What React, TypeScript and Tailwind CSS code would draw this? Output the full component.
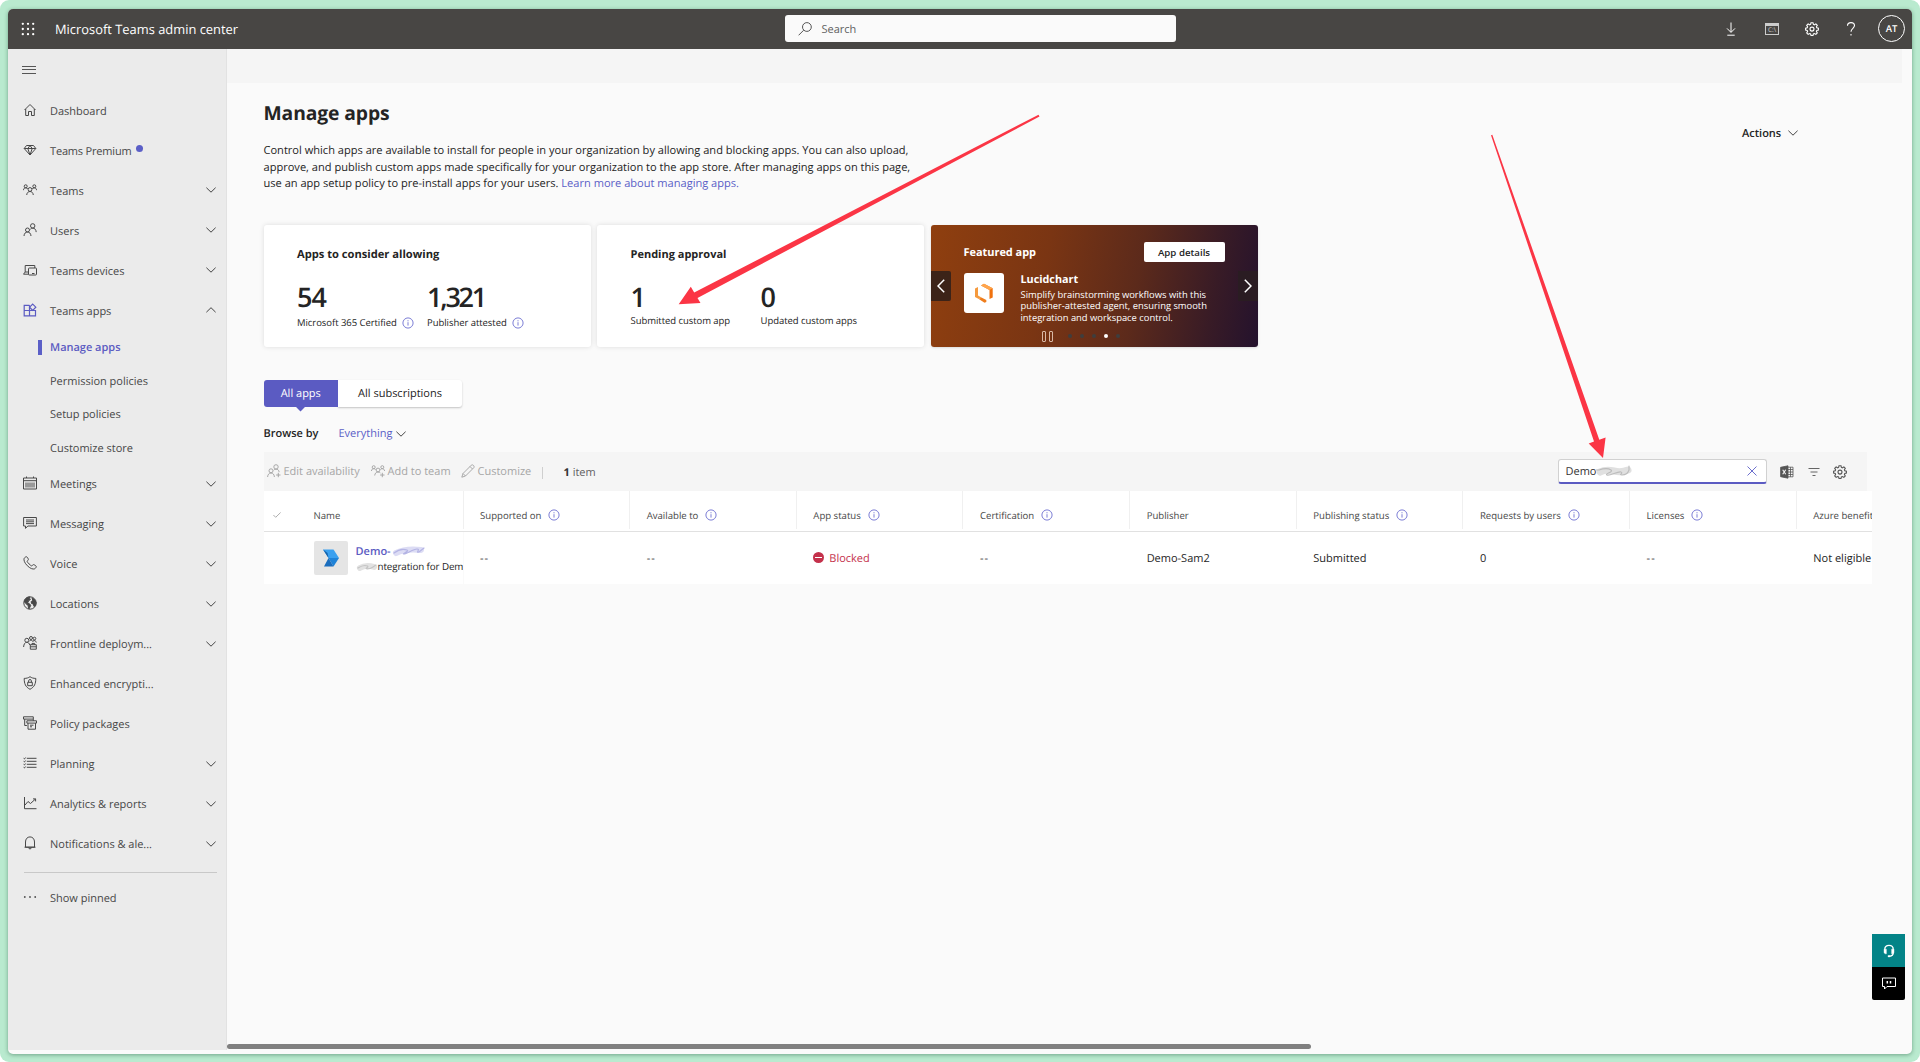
import React from "react";
import clsx from "clsx";

const navIcons: Record<string, React.ReactNode> = {
  home: <path d="M1.500 7 7 1.500 12.500 7M2.700 6v6.500h2.800V8.500h3v4h2.800V6" />,
  diamond: <path d="M3.500 2.500h7L12.800 5.500 7 12 1.200 5.500ZM1.200 5.500h11.600M4.800 5.500 7 2.500 9.200 5.500M4.800 5.500 7 12 9.200 5.500" />,
  teams: (
    <g>
      <circle cx="7" cy="6.500" r="1.900" />
      <circle cx="2.700" cy="3.300" r="1.500" />
      <circle cx="11.300" cy="3.300" r="1.500" />
      <path d="M3.700 12c.3-2.300 1.500-3.500 3.300-3.500s3 1.200 3.300 3.500M.4 7.200C.6 5.600 1.400 4.800 2.700 4.800c1 0 1.700.4 2 1.200M13.600 7.200c-.2-1.600-1-2.400-2.300-2.400-1 0-1.700.4-2 1.200" />
    </g>
  ),
  users: (
    <g>
      <circle cx="4.500" cy="7" r="2" />
      <circle cx="9.700" cy="2.900" r="2.200" />
      <path d="M1 13c.2-2.500 1.500-4 3.500-4S7.800 10.500 8 13M7.300 6.300c.6-.8 1.400-1.200 2.400-1.200 2 0 3.300 1.500 3.500 4" />
    </g>
  ),
  devices: (
    <g>
      <path d="M2.200 9V2.500h9.600V5M.5 11.200h5M.5 11.200 2.200 9h3.300" />
      <rect x="5.500" y="5" width="8" height="7" rx=".8" />
      <path d="M9 10.500h2.500" />
    </g>
  ),
  apps: (
    <g>
      <path d="M6.500 2.300H1.200v10.500h11.300V7.500H1.200M6.500 2.300v10.500" />
      <path d="m9.700 1.100 3.100 3.100-3.100 3.100-3.100-3.100Z" />
    </g>
  ),
  calendar: <path d="M.5 2h13v11H.5ZM.5 4.700h13M3.500.5V2M10.500.5V2M3 6.500v5M5 6.500v5M7 6.500v5M9 6.500v5M11 6.500v5" />,
  message: <path d="M.6 1.500h12.800v8.500H4.800L2.500 12.400V10H.6ZM3 4h8M3 5.800h8M3 7.600h8" />,
  phone: (
    <path d="M3.700.8C3 .5 1.800 1.300 1.200 2.300.4 4 1.600 7 4.300 9.700s5.700 3.900 7.400 3.100c1-.6 1.800-1.800 1.500-2.500-.3-.6-2.100-1.700-2.700-1.700-.7 0-1.200 1.300-1.800 1.300-.9 0-4.600-3.700-4.600-4.600 0-.6 1.300-1.100 1.300-1.800C5.400 2.900 4.300 1.100 3.700.8Z" />
  ),
  globe: (
    <g>
      <circle cx="7" cy="7" r="6.200" />
      <path
        fill="currentColor"
        d="M2 3.500C3 2 5 .8 7 1l-.8 1.500 1.300.8-1.800 1.500L4.500 7l2 .8 1.200 1.500-1.500 3.500-.7-.2-.3-2.800L3.500 8 1.300 6Zm7-1.700 2.500 1.700L13 6.500l-.5 3-1.500 1-.7-2.500-1.800-.5-.3-1.800 1.500-1.500Z"
      />
    </g>
  ),
  frontline: (
    <g>
      <circle cx="3.800" cy="4.300" r="2" />
      <circle cx="8" cy="2" r="1.500" />
      <circle cx="11.500" cy="2.500" r="1.300" />
      <path d="M.6 11c.2-2.800 1.300-4.700 3.200-4.700 1.500 0 2.500 1 3 2.700M6.500 5c1-1 3-1 3.500.8M10 5c1.500-1 3-.3 3.300 1.500" />
      <path d="M7.300 8.700h6v4.500h-6ZM7.300 10.800h6M9 8.700V7.400h2.600v1.300" />
    </g>
  ),
  shield: (
    <g>
      <path d="M7 .7c1.600 1.200 3.500 1.700 5.800 1.700 0 5.300-1.300 8.600-5.800 10.900C2.500 11 1.200 7.700 1.200 2.400 3.500 2.400 5.400 1.900 7 .7Z" />
      <path d="M4.700 6.300h4.600v3.400H4.700ZM5.600 6.300V4.800c0-1.700 2.800-1.700 2.800 0v1.500" />
    </g>
  ),
  packages: (
    <g>
      <path d="M.5.800h9.800v2.300H.5ZM1.700 3.100v6.400h2.200M10.300 3.100v1.700" />
      <path d="M3.900 4.800h9.600v2.300H3.900ZM5 7.100v6.100h7.500V7.100M7 9.200h3.500M7 10.800h2" />
    </g>
  ),
  list: <path d="M3.800 2.300h9.700M3.800 5.300h9.700M3.800 8.300h9.700M3.800 11.300h9.700M.6 2.300l.8.700L2.600 1.500M.6 5.300l.8.700 1.200-1.500M.6 8.300l.8.700L2.600 7.500M.6 11.300l.8.700 1.200-1.500" />,
  chart: <path d="M1.500 1v11.700h12M2 9l3-3.500 2.500 2L12.500 3M10 2.900h2.600v2.500" />,
  bell: <path d="M2.500 11.200V6C2.500 3 4.300.9 7 .9S11.500 3 11.500 6v5.200ZM1.500 11.200h11M5.500 11.500c.2 1.900 2.800 1.900 3 0" />,
};

const NavIcon = ({ name }: { name: string }) => (
  <svg
    viewBox="0 0 14 14"
    className={clsx("w-[14px] h-[14px] mb-[2px] shrink-0", name === "apps" ? "text-[#5b5bc2]" : "text-[#484848]")}
    fill="none"
    stroke="currentColor"
    strokeWidth={name === "apps" ? 1.2 : 1}
  >
    {navIcons[name]}
  </svg>
);

const Chevron = ({ up = false, className = "" }) => (
  <svg viewBox="0 0 10 6" className={clsx("w-[10px] h-[6px] shrink-0", className)} fill="none" stroke="#444" strokeWidth="1">
    <path d={up ? "M.4 5.200 5 .7l4.600 4.500" : "M.4.700 5 5.200 9.600.700"} />
  </svg>
);

const Info = ({ className = "" }) => (
  <svg viewBox="0 0 12 12" className={clsx("w-[12px] h-[12px] shrink-0", className)} fill="none" stroke="#6d6fd0" strokeWidth=".9">
    <circle cx="6" cy="6" r="5.100" />
    <path d="M6 5.200v3.400M6 3.200v1.100" />
  </svg>
);

const Gear = ({ className = "" }) => (
  <svg viewBox="0 0 14 14" className={clsx("w-[14px] h-[14px] shrink-0", className)} fill="none" stroke="currentColor" strokeWidth="1.100">
    <path d="M6 .7h2l.4 1.700 1 .4 1.500-.9 1.400 1.400-.9 1.500.4 1 1.600.4v1.900l-1.600.4-.4 1 .9 1.500-1.400 1.400-1.500-.9-1 .4L8 13.500H6l-.4-1.600-1-.4-1.500.9L1.700 11l.9-1.500-.4-1L.6 8.100V6.200l1.600-.4.4-1-.9-1.500 1.400-1.400 1.500.9 1-.4Z" />
    <circle cx="7" cy="7.100" r="2" />
  </svg>
);

const topNav = [
  { name: "Dashboard", icon: "home" },
  { name: "Teams Premium", icon: "diamond", dot: true },
  { name: "Teams", icon: "teams", menu: true },
  { name: "Users", icon: "users", menu: true },
  { name: "Teams devices", icon: "devices", menu: true },
  { name: "Teams apps", icon: "apps", menu: true, open: true },
];

const subNav = ["Manage apps", "Permission policies", "Setup policies", "Customize store"];

const bottomNav = [
  { name: "Meetings", icon: "calendar", menu: true },
  { name: "Messaging", icon: "message", menu: true },
  { name: "Voice", icon: "phone", menu: true },
  { name: "Locations", icon: "globe", menu: true },
  { name: "Frontline deploym...", icon: "frontline", menu: true },
  { name: "Enhanced encrypti...", icon: "shield" },
  { name: "Policy packages", icon: "packages" },
  { name: "Planning", icon: "list", menu: true },
  { name: "Analytics & reports", icon: "chart", menu: true },
  { name: "Notifications & ale...", icon: "bell", menu: true },
];

const columns = [
  { name: "Supported on", info: true, value: "--" },
  { name: "Available to", info: true, value: "--" },
  { name: "App status", info: true, value: "Blocked" },
  { name: "Certification", info: true, value: "--" },
  { name: "Publisher", value: "Demo-Sam2" },
  { name: "Publishing status", info: true, value: "Submitted" },
  { name: "Requests by users", info: true, value: "0" },
  { name: "Licenses", info: true, value: "--" },
  { name: "Azure benefit", value: "Not eligible" },
];

type Item = { name: string; icon: string; menu?: boolean; open?: boolean; dot?: boolean };

const NavItem = ({ item }: { item: Item }) => (
  <div className="flex items-center h-[40px] pl-[15px] pr-[10px]">
    <NavIcon name={item.icon} />
    <span className={clsx("ml-[13px] mt-[3px] whitespace-nowrap", item.dot && "tracking-[-0.180px]")}>{item.name}</span>
    {item.dot && <span className="w-[7px] h-[7px] mb-[5px] ml-[5px] rounded-full bg-[#5b5fc7]" />}
    {item.menu && <Chevron up={item.open} className="ml-auto mb-px" />}
  </div>
);

const Header = () => (
  <header className="flex items-center h-[40px] shrink-0 bg-[#484644] text-white">
    <svg viewBox="0 0 14 14" className="w-[14px] h-[14px] ml-[13px]" fill="#fff">
      {[1.8, 7, 12.2].map((y) => [1.8, 7, 12.2].map((x) => <circle key={`${x}${y}`} cx={x} cy={y} r="1.150" />))}
    </svg>
    <p className="ml-[20px] mt-[2px] w-[729.500px] text-[12.900px] font-medium">Microsoft Teams admin center</p>
    <div className="flex items-center w-[391px] h-[27px] rounded-[3px] bg-[#fafafa]">
      <svg viewBox="0 0 14 14" className="w-[14px] h-[14px] ml-[13px]" fill="none" stroke="#555" strokeWidth="1">
        <circle cx="8.900" cy="5" r="4.400" />
        <path d="M5.700 8.200.6 13.300" />
      </svg>
      <span className="ml-[10px] mt-[3px] text-[11px] text-[#616161]">Search</span>
    </div>
    <div className="flex items-center ml-auto mr-[7px]">
      <svg viewBox="0 0 10 14" className="w-[10px] h-[14px]" fill="none" stroke="#fff" strokeWidth="1">
        <path d="M5 .5v9.700M1 6.400l4 4 4-4M1.300 13.200h7.400" />
      </svg>
      <div className="flex flex-col w-[14px] h-[12px] ml-[29px] border border-[#ccc] border-t-[3px]">
        <span className="text-[6.500px] leading-[8px] text-center text-[#ccc]">C:\</span>
      </div>
      <Gear className="ml-[26px]" />
      <svg viewBox="0 0 10 14" className="w-[10px] h-[14px] ml-[27px]" fill="none" stroke="#fff" strokeWidth="1.100">
        <path d="M1.500 3.800C1.500 1.800 3 .6 5 .6s3.500 1.200 3.500 3C8.500 6.200 5 6.500 5 9.700M5 12v1.500" />
      </svg>
      <div className="flex items-center justify-center w-[27px] h-[27px] pt-px ml-[22px] rounded-full border border-white text-[9.500px] font-semibold">
        AT
      </div>
    </div>
  </header>
);

const Sidebar = () => (
  <nav className="flex flex-col w-[219px] h-[1001px] shrink-0 bg-[#ebebeb] border-r border-[#e2e2e2] text-[11px] tracking-[-0.010px] text-[#484848]">
    <div className="h-[42px] pt-[17px] pl-[14px]">
      <div className="w-[14px] h-[8px] border-y border-[#555] pt-[2.500px]">
        <div className="h-px bg-[#555]" />
      </div>
    </div>
    {topNav.map((item) => (
      <NavItem key={item.name} item={item} />
    ))}
    {subNav.map((name, idx) => (
      <div key={name} className={clsx("flex items-center h-[33.400px]", idx === 0 && "text-[#5b5bc2] font-semibold")}>
        <span className={clsx("w-[4px] h-[15px] ml-[30px] mr-[8px]", idx === 0 && "bg-[#5b5fc7]")} />
        <span className="mt-[3px]">{name}</span>
      </div>
    ))}
    {bottomNav.map((item) => (
      <NavItem key={item.name} item={item} />
    ))}
    <div className="h-px mt-[8px] mb-[5px] ml-[16px] mr-[9px] bg-[#c8c8c8]" />
    <div className="flex items-center h-[40px] pl-[15px]">
      <svg viewBox="0 0 14 14" className="w-[14px] h-[14px]" fill="#4f4f4f">
        <circle cx="1.800" cy="6" r=".9" />
        <circle cx="7" cy="6" r=".9" />
        <circle cx="12.200" cy="6" r=".9" />
      </svg>
      <span className="ml-[13px] mt-[2px]">Show pinned</span>
    </div>
  </nav>
);

const Stat = ({ value, label, info = false }: { value: string; label: string; info?: boolean }) => (
  <div className="w-[130px]">
    <p className={clsx("text-[27px] leading-[30px] font-semibold", value.length > 2 ? "tracking-[-2.200px]" : "tracking-[-0.900px]")}>{value}</p>
    <div className={clsx("flex items-center h-[14px] text-[9.500px] whitespace-nowrap tracking-[-0.050px]", info ? "mt-[4px]" : "mt-[2px]")}>
      <span className="mt-[2px]">{label}</span>
      {info && <Info className="ml-[5px]" />}
    </div>
  </div>
);

const Featured = () => (
  <div className="flex items-start w-[327px] h-[122px] rounded-[3px] text-white bg-[linear-gradient(100deg,#8f3f0f_0%,#7a3513_35%,#5c2a1b_62%,#381b26_85%,#24122d_100%)] shadow">
    <div className="flex items-center justify-center w-[20px] h-[30px] mt-[46px] bg-[#3c2318] rounded-r-[2px]">
      <svg viewBox="0 0 8 14" className="w-[8px] h-[14px]" fill="none" stroke="#fff" strokeWidth="1.500">
        <path d="M7.200.8 1 7l6.200 6.200" />
      </svg>
    </div>
    <div className="w-[287px] pl-[13px] pr-[13px] pt-[17px]">
      <div className="flex items-center justify-between h-[21px]">
        <p className="mt-[2px] text-[11px] font-bold tracking-[-0.050px]">Featured app</p>
        <button className="w-[81px] h-[20px] pt-[2px] rounded-[2px] bg-white text-[9.700px] font-semibold text-[#242424]">App details</button>
      </div>
      <div className="flex mt-[10px]">
        <div className="flex items-center justify-center w-[40px] h-[40px] rounded-[3px] bg-white">
          <svg viewBox="0 0 18 20" className="w-[18px] h-[20px]">
            <path d="M0 5.500 3 4v8.500l3.500 2L3.800 16 0 14Z" fill="#f59a3e" />
            <path d="M6 2.500 9 .8l8.700 4.500v9.200L14.500 16V7Z" fill="#f0720f" />
            <path d="M6 2.500 9 .8l8.700 4.500-3.200 1.700Z" fill="#ffa64d" />
            <path d="m3.800 16 2.700-1.500 4.800 2.600v2L9.500 19.700Z" fill="#ef7d1c" />
          </svg>
        </div>
        <div className="ml-[17px] text-[9.400px] leading-[11.700px] whitespace-nowrap">
          <p className="mb-[2px] text-[10.800px] leading-[14px] font-bold">Lucidchart</p>
          <p>Simplify brainstorming workflows with this</p>
          <p>publisher-attested agent, ensuring smooth</p>
          <p>integration and workspace control.</p>
        </div>
      </div>
      <div className="flex items-center mt-[7px] ml-[78px]">
        <div className="w-[4px] h-[11px] rounded-[1px] border border-[#d8b8a5]" />
        <div className="w-[4px] h-[11px] ml-[3px] rounded-[1px] border border-[#d8b8a5]" />
        <div className="flex ml-[15px] gap-[8px]">
          {[0, 1, 2, 3, 4].map((i) => (
            <div key={i} className={clsx("w-[4px] h-[4px] rounded-full", i === 3 ? "bg-white" : "bg-[#3e3e3e]")} />
          ))}
        </div>
      </div>
    </div>
    <div className="flex items-center justify-center w-[20px] h-[30px] mt-[46px] bg-[#2a1c22]">
      <svg viewBox="0 0 8 14" className="w-[8px] h-[14px]" fill="none" stroke="#fff" strokeWidth="1.500">
        <path d="M.8.800 7 7 .8 13.200" />
      </svg>
    </div>
  </div>
);

const Toolbar = () => (
  <div className="flex items-center w-[1603px] h-[39px] bg-[#f5f5f5] text-[11px] text-[#a6a6a6] whitespace-nowrap">
    <svg viewBox="0 0 14 14" className="w-[14px] h-[14px] ml-[3px]" fill="none" stroke="#a0a0a0" strokeWidth=".9">
      <circle cx="4" cy="6.800" r="2" />
      <circle cx="9" cy="2.900" r="2.200" />
      <path d="M.6 13c.2-2.500 1.400-4 3.400-4S7.200 10.500 7.400 13M6.700 6.200C7.300 5.500 8 5.100 9 5.100c1.700 0 2.800 1 3.200 3M11.300 8.800v4.400M9.100 11h4.400" />
    </svg>
    <span className="w-[87px] ml-[3px] mt-[2px]">Edit availability</span>
    <svg viewBox="0 0 14 14" className="w-[14px] h-[14px]" fill="none" stroke="#a0a0a0" strokeWidth=".9">
      <circle cx="7" cy="6" r="1.900" />
      <circle cx="2.700" cy="3.200" r="1.500" />
      <circle cx="11.300" cy="3.200" r="1.500" />
      <path d="M3.700 11.500c.3-2.300 1.500-3.500 3.300-3.500 1 0 1.800.3 2.400.9M.4 7C.6 5.500 1.400 4.700 2.700 4.700c1 0 1.500.3 1.900.9M13.600 7c-.2-1.500-1-2.300-2.300-2.300-1 0-1.500.3-1.900.9M11.300 8.800v4.400M9.100 11h4.400" />
    </svg>
    <span className="w-[73px] ml-[3px] mt-[2px]">Add to team</span>
    <svg viewBox="0 0 14 14" className="w-[14px] h-[14px]" fill="none" stroke="#a0a0a0" strokeWidth=".9">
      <path d="M.8 13.200 2 9.500 10.300 1.200c1.400-1.200 3.600 1 2.500 2.500L4.500 12ZM2 9.500 4.500 12M9 2.500 11.500 5" />
    </svg>
    <span className="w-[64px] ml-[3px] mt-[2px]">Customize</span>
    <span className="w-px h-[12px] mt-[4px] bg-[#cfcfcf]" />
    <span className="ml-[21px] mt-[5px] text-[#616161]">
      <b className="text-[#333]">1</b> item
    </span>
    <div className="flex items-center w-[209px] h-[25px] ml-auto px-[7px] rounded-[3px] bg-white border border-[#d1d1d1] border-b-2 border-b-[#5b5bc2] text-[#333]">
      <span className="mt-[3px]">Demo</span>
      <svg viewBox="0 0 40 16" className="w-[40px] h-[16px] -ml-[1px]" fill="none" strokeLinecap="round">
        <path d="M5 9c6-3 10-2 14-1s9 1 14-1" stroke="#e0e0e0" strokeWidth="7" />
        <path d="M1 7h3c6-2 9-2 12 0s-7 4-4 5 11-4 14-3-3 3 1 3 6-2 7-5V3" stroke="#bcbcbc" strokeWidth="1.100" />
      </svg>
      <svg viewBox="0 0 10 10" className="w-[10px] h-[10px] ml-auto mr-[2px]" stroke="#5b5fc7" strokeWidth=".9">
        <path d="m.5.500 9 9M9.500.500l-9 9" />
      </svg>
    </div>
    <svg viewBox="0 0 14 14" className="w-[14px] h-[14px] ml-[13px] mt-px" fill="none" stroke="#555" strokeWidth=".8">
      <path d="M.6 2.300 8 .800v12.400L.600 11.700Z" fill="#555" />
      <path d="m2.700 4.700 3 4.600M5.700 4.700l-3 4.600" stroke="#f5f5f5" strokeWidth="1.100" />
      <path d="M8 2.200h5v9.600H8M10.500 2.200v9.600M8 4.500h5M8 7h5M8 9.500h5" />
    </svg>
    <svg viewBox="0 0 12 10" className="w-[12px] h-[10px] ml-[14px] mt-px" stroke="#555" strokeWidth=".9">
      <path d="M.5 1.500h11M2.500 5h7M4.500 8.500h3" />
    </svg>
    <Gear className="ml-[13px] mr-[20px] mt-px text-[#555]" />
  </div>
);

const Cell = ({ value }: { value: string }) =>
  value === "Blocked" ? (
    <div className="flex items-center text-[#c4314b]">
      <span className="flex items-center justify-center w-[11px] h-[11px] mr-[5px] rounded-full bg-[#c4314b]">
        <span className="w-[7px] h-px bg-white" />
      </span>
      <span className="mt-[3px]">Blocked</span>
    </div>
  ) : (
    <span className={clsx("mt-[3px]", value === "--" && "tracking-[1px]")}>{value}</span>
  );

const Table = () => (
  <div className="w-[1608px] overflow-hidden bg-white">
    <div className="flex w-[1700px] h-[41px] border-b border-[#e1e1e1] text-[9.600px] text-[#484848] whitespace-nowrap">
      <div className="flex items-center w-[200px] h-[38px] pt-[10px] pl-[9px] shrink-0 border-r border-[#f0f0f0]">
        <svg viewBox="0 0 8 6" className="w-[8px] h-[6px] mr-[33px]" fill="none" stroke="#999" strokeWidth=".8">
          <path d="m.4 3 2.300 2.300L7.600.5" />
        </svg>
        <span className="mt-[3px]">Name</span>
      </div>
      {columns.map((col) => (
        <div key={col.name} className="flex items-center w-[166.670px] h-[38px] pt-[10px] pl-[16.500px] shrink-0 border-r border-[#f0f0f0]">
          <span className="mt-[3px]">{col.name}</span>
          {col.info && <Info className="ml-[7px]" />}
        </div>
      ))}
    </div>
    <div className="flex w-[1700px] h-[52.500px] text-[11px] text-[#242424] whitespace-nowrap">
      <div className="flex items-center w-[200px] pl-[50px] shrink-0 overflow-hidden border-r border-[#fafafa]">
        <div className="flex items-center justify-center w-[34px] h-[34px] shrink-0 rounded-[2px] bg-[#e5e5e5]">
          <svg viewBox="0 0 16 18" className="w-[16px] h-[18px]">
            <path d="M0 .500h10.500L16 9H5.500Z" fill="#3aa0ef" />
            <path d="M0 .500 4.500 4 5.500 9Z" fill="#1460a8" />
            <path d="M5.500 9H16l-5.500 8.500Z" fill="#1f83d8" />
            <path d="m5.500 9 5 8.500H1Z" fill="#1a6dbd" />
          </svg>
        </div>
        <div className="ml-[8px] pt-[3px]">
          <div className="flex items-center h-[16px] text-[11px] leading-[14px] font-semibold text-[#5b5bc2]">
            Demo-
            <svg viewBox="0 0 36 14" className="w-[36px] h-[14px] -mt-[2px]" fill="none" strokeLinecap="round">
              <path d="M5 9c8-4 16-4 25-3" stroke="#dcdcf4" strokeWidth="6" />
              <path d="M3 9c5-4 10-4 13-3s-6 4-3 4 9-5 13-5-2 4 2 3l5-4" stroke="#b4b4e4" strokeWidth="1.200" />
            </svg>
          </div>
          <div className="flex items-center h-[14px] text-[9.800px] leading-[12px] tracking-[-0.1px]">
            <svg viewBox="0 0 23 12" className="w-[22px] h-[12px] shrink-0" fill="none" strokeLinecap="round">
              <path d="M4 7c5-3 9-3 15-1" stroke="#e2e2e2" strokeWidth="6" />
              <path d="M2 7c5-3 8-3 10-2s-4 3 0 3 5-2 9-4" stroke="#c4c4c4" strokeWidth="1.200" />
            </svg>
            ntegration for Demo-Sam2
          </div>
        </div>
      </div>
      {columns.map((col) => (
        <div key={col.name} className="flex items-center w-[166.670px] pl-[16.500px] shrink-0">
          <Cell value={col.value} />
        </div>
      ))}
    </div>
  </div>
);

const Arrows = () => (
  <svg viewBox="0 0 1920 1062" className="absolute inset-0 w-[1920px] h-[1062px] pointer-events-none" fill="#fb3545">
    <path d="M1038.500 114.700 694.200 292.500 690.800 286.700 678.700 304.200 700.500 303 697.500 298 1039.500 116.500Z" />
    <path d="M1491 135.200 1594 441.500 1588.700 443.600 1603 458 1605.600 437.500 1599.300 439.700 1492.300 134.700Z" />
  </svg>
);

export default function App() {
  return (
    <div className="w-[1920px] h-[1062px] bg-white overflow-hidden relative font-['Open_Sans','Noto_Sans',sans-serif] [text-rendering:geometricPrecision]">
      <div className="w-full h-full pt-[8.500px] pl-[8px] rounded-[9px] bg-[#b9eacf]">
        <div className="flex flex-col w-[1904px] h-[1045px] rounded-[5px] overflow-hidden bg-[#fafafa] shadow-[0_1px_4px_rgba(0,60,30,0.4)]">
          <Header />
          <div className="flex">
            <Sidebar />
            <main className="w-[1685px] h-[1005px] text-[#242424]">
              <div className="w-[1675px] h-[34px] bg-[#f5f5f5]" />
              <div className="pl-[36.500px] h-[961px]">
                <div className="flex justify-between pt-[16px]">
                  <h1 className="text-[19.300px] leading-[28px] font-bold tracking-[-0.100px]">Manage apps</h1>
                  <div className="flex items-center w-[170px] mt-[20px] h-[28px] text-[11px] font-semibold">
                    <span className="mt-[3px]">Actions</span>
                    <Chevron className="ml-[7px]" />
                  </div>
                </div>
                <p className="mt-[-3.500px] text-[11.070px] leading-[16.670px] whitespace-nowrap">
                  Control which apps are available to install for people in your organization by allowing and blocking apps. You can also upload,
                  <br />
                  approve, and publish custom apps made specifically for your organization to the app store. After managing apps on this page,
                  <br />
                  use an app setup policy to pre-install apps for your users. <a className="text-[#5b5fc7]">Learn more about managing apps.</a>
                </p>
                <div className="flex gap-[6.500px] mt-[31.500px]">
                  <div className="w-[327px] h-[122px] px-[33.500px] pt-[22px] rounded-[3px] bg-white shadow-[0_0_5px_rgba(0,0,0,0.12)]">
                    <p className="mb-[19px] text-[11.150px] leading-[16px] font-bold">Apps to consider allowing</p>
                    <div className="flex">
                      <Stat value="54" label="Microsoft 365 Certified" info />
                      <Stat value="1,321" label="Publisher attested" info />
                    </div>
                  </div>
                  <div className="w-[327px] h-[122px] px-[33.500px] pt-[22px] rounded-[3px] bg-white shadow-[0_0_5px_rgba(0,0,0,0.12)]">
                    <p className="mb-[19px] text-[11px] leading-[16px] font-bold">Pending approval</p>
                    <div className="flex">
                      <Stat value="1" label="Submitted custom app" />
                      <Stat value="0" label="Updated custom apps" />
                    </div>
                  </div>
                  <Featured />
                </div>
                <div className="flex h-[27px] mt-[33px] text-[11px]">
                  <div className="relative flex items-center justify-center w-[74.500px] pt-[3px] rounded-l-[3px] bg-[#5b5bc2] text-white">
                    All apps
                    <div className="absolute bottom-[-3px] w-[7px] h-[7px] rotate-45 bg-[#5b5bc2]" />
                  </div>
                  <div className="flex items-center justify-center w-[124px] pt-[3px] rounded-r-[3px] bg-white shadow-[0_1px_2px_rgba(0,0,0,0.22)]">
                    All subscriptions
                  </div>
                </div>
                <div className="flex items-center h-[45px] pt-[8px] text-[11px]">
                  <span className="w-[75px] mt-[3px] font-semibold">Browse by</span>
                  <span className="mt-[3px] text-[#5b5fc7]">Everything</span>
                  <Chevron className="ml-[4px] mt-px" />
                </div>
                <Toolbar />
                <Table />
              </div>
              <div className="w-[1084px] h-[5px] rounded-full bg-[#808080]" />
            </main>
          </div>
        </div>
      </div>
      <div className="absolute right-[15px] top-[934px] w-[33px]">
        <div className="flex items-center justify-center h-[33px] bg-[#038387]">
          <svg viewBox="0 0 12 14" className="w-[12px] h-[14px]" fill="none" stroke="#fff" strokeWidth="1.300">
            <path d="M1.800 6V5.200c0-5.200 8.400-5.200 8.400 0V6M10.200 9c0 1.800-1.200 3-3.700 3.300" />
            <path d="M1 5.200h2.400v4.600H2.200L1 8.800ZM8.600 5.200H11v3.600l-1.200 1H8.600ZM5 11.500h2v1.400H5Z" fill="#fff" strokeWidth=".4" />
          </svg>
        </div>
        <div className="flex items-center justify-center h-[33px] rounded-b-[2px] bg-black">
          <svg viewBox="0 0 14 13" className="w-[14px] h-[13px]" fill="none" stroke="#fff" strokeWidth="1">
            <path d="M.5 1h13v8.500H5L2.500 12V9.500h-2Z" />
            <path d="M5.300 4v2.500M8.500 4v2.500" strokeWidth="1.500" />
          </svg>
        </div>
      </div>
      <Arrows />
    </div>
  );
}
